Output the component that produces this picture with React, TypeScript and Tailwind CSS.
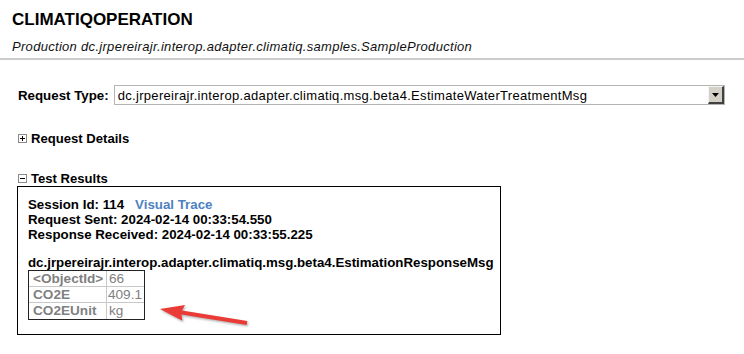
import React from "react";

function PlusMinus({ minus }: { minus?: boolean }) {
  return (
    <svg width="9" height="9" viewBox="0 0 9 9" className="shrink-0">
      <rect x="0.5" y="0.5" width="8" height="8" fill="#ffffff" stroke="#8a8a8a" />
      <rect x="2" y="4" width="5" height="1" fill="#000000" />
      {!minus && <rect x="4" y="2" width="1" height="5" fill="#000000" />}
    </svg>
  );
}

export default function App() {
  return (
    <div className="relative w-[744px] h-[354px] overflow-hidden bg-white text-black font-['Liberation_Sans',Arial,sans-serif]">
      <div className="pl-3 pt-[10px]">
        <div className="text-[17px] font-bold leading-[20px] text-[#000]">CLIMATIQOPERATION</div>
        <div className="mt-[9px] italic text-[13px] leading-[16px] tracking-[0.3px] text-[#111]">
          Production dc.jrpereirajr.interop.adapter.climatiq.samples.SampleProduction
        </div>
      </div>
      <div className="mt-[3px] h-[2px] bg-[#cccccc]" />

      <div className="mt-[25px] flex items-center pl-[18px]">
        <span className="text-[13.3px] font-bold leading-[15px]">Request Type:</span>
        <div className="ml-[5px] flex h-[20px] w-[611px] items-center border border-[#b4b4b4] bg-white">
          <span className="flex-1 pl-[3px] text-[13px] leading-[15px] tracking-[0.32px]">
            dc.jrpereirajr.interop.adapter.climatiq.msg.beta4.EstimateWaterTreatmentMsg
          </span>
          <div className="flex h-[18px] w-[16px] items-center justify-center border-t border-l border-t-[#f4f4f4] border-l-[#f4f4f4] border-r-2 border-b-2 border-r-[#404040] border-b-[#404040] bg-[#d4d0c8]">
            <svg width="7" height="4" viewBox="0 0 7 4">
              <polygon points="0,0 7,0 3.5,4" fill="#000" />
            </svg>
          </div>
        </div>
      </div>

      <div className="mt-[26px] flex items-center gap-[4px] pl-[18px]">
        <PlusMinus />
        <span className="text-[13.1px] font-bold leading-[15px]">Request Details</span>
      </div>

      <div className="mt-[25px] flex items-center gap-[4px] pl-[18px]">
        <PlusMinus minus />
        <span className="text-[13.1px] font-bold leading-[15px]">Test Results</span>
      </div>

      <div className="ml-[17px] h-[149px] w-[484px] border border-black pl-[10px] pt-[10px]">
        <div className="text-[13.3px] font-bold leading-[15px]">
          Session Id: 114
          <span className="ml-[11px] text-[#4d82c2]">Visual Trace</span>
        </div>
        <div className="text-[13.3px] font-bold leading-[15px]">Request Sent: 2024-02-14 00:33:54.550</div>
        <div className="text-[13.3px] font-bold leading-[15px]">Response Received: 2024-02-14 00:33:55.225</div>
        <div className="mt-[13px] text-[13.3px] font-bold leading-[15px]">
          dc.jrpereirajr.interop.adapter.climatiq.msg.beta4.EstimationResponseMsg
        </div>
        <div className="w-[117px] border border-[#222]">
          <div className="grid grid-cols-[78px_37px] text-[13.6px] leading-[15px] text-[#7f7f7f]">
            <div className="border-r border-b border-[#c8c8c8] pl-[4px] font-bold">&lt;ObjectId&gt;</div>
            <div className="border-b border-[#c8c8c8] pl-[2px]">66</div>
            <div className="border-r border-b border-[#c8c8c8] pl-[4px] font-bold">CO2E</div>
            <div className="border-b border-[#c8c8c8] pl-[1px]">409.1</div>
            <div className="border-r border-[#c8c8c8] pl-[4px] font-bold leading-[16px]">CO2EUnit</div>
            <div className="pl-[2px] leading-[16px]">kg</div>
          </div>
        </div>
      </div>

      <svg className="absolute left-0 top-0" width="744" height="354" viewBox="0 0 744 354">
        <defs>
          <filter id="sh" x="-20%" y="-50%" width="140%" height="200%">
            <feGaussianBlur stdDeviation="1" />
          </filter>
        </defs>
        <polygon
          points="160,309 185,305 182,310.5 247.3,321 246.7,325 181.4,314.5 182.4,320.7"
          fill="#555"
          opacity="0.45"
          filter="url(#sh)"
          transform="translate(1,1.5)"
        />
        <polygon
          points="160,309 185,305 182,310.5 247.3,321 246.7,325 181.4,314.5 182.4,320.7"
          fill="#ea3b36"
        />
      </svg>
    </div>
  );
}
